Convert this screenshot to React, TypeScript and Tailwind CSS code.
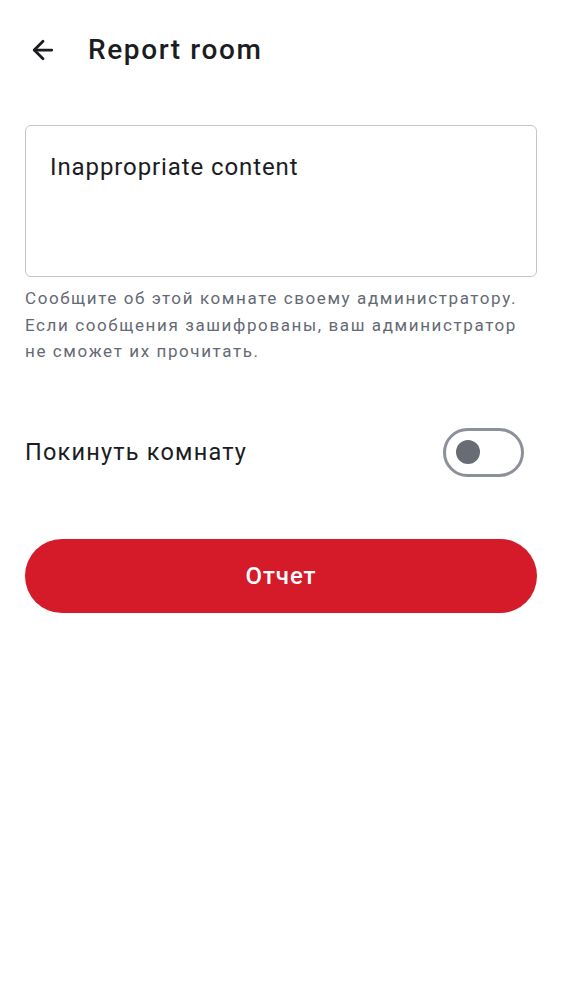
import { ArrowLeft } from 'lucide-react';

export default function App() {
  return (
    <div className="min-h-[1000px] w-full bg-white font-['Roboto',sans-serif] text-[#1b1c1f]">
      {/* Top bar */}
      <div className="flex h-[100px] items-center px-[28px]">
        <ArrowLeft className="h-[30px] w-[30px] text-[#1b1c1f]" strokeWidth={2.2} />
        <h1 className="ml-[30px] text-[28px] font-medium leading-none tracking-[1.6px]">Report room</h1>
      </div>

      <div className="px-[25px] pt-[25px]">
        {/* Reason textarea */}
        <div className="h-[152px] rounded-[6px] border-[1.5px] border-[#c3c6cc] px-[24px] pt-[26px]">
          <p className="text-[24px] leading-[30px] tracking-[0.9px]">Inappropriate content</p>
        </div>
        <p className="mt-[8px] text-[17px] leading-[26.5px] tracking-[1.6px] text-[#646a73]">
          Сообщите об этой комнате своему администратору. Если сообщения зашифрованы, ваш
          администратор не сможет их прочитать.
        </p>

        {/* Leave room toggle */}
        <div className="mt-[63px] flex items-center justify-between pr-[13px]">
          <span className="text-[23.5px] leading-[30px] tracking-[1.2px]">Покинуть комнату</span>
          <div className="flex h-[49px] w-[81px] items-center rounded-full border-[3px] border-[#8c9199] pl-[10px]">
            <div className="h-[24px] w-[24px] rounded-full bg-[#686d75]" />
          </div>
        </div>

        {/* Submit */}
        <button className="mt-[62px] flex h-[74px] w-full items-center justify-center rounded-full bg-[#d51a2a] text-[24px] font-medium tracking-[0.9px] text-white">
          Отчет
        </button>
      </div>
    </div>
  );
}
